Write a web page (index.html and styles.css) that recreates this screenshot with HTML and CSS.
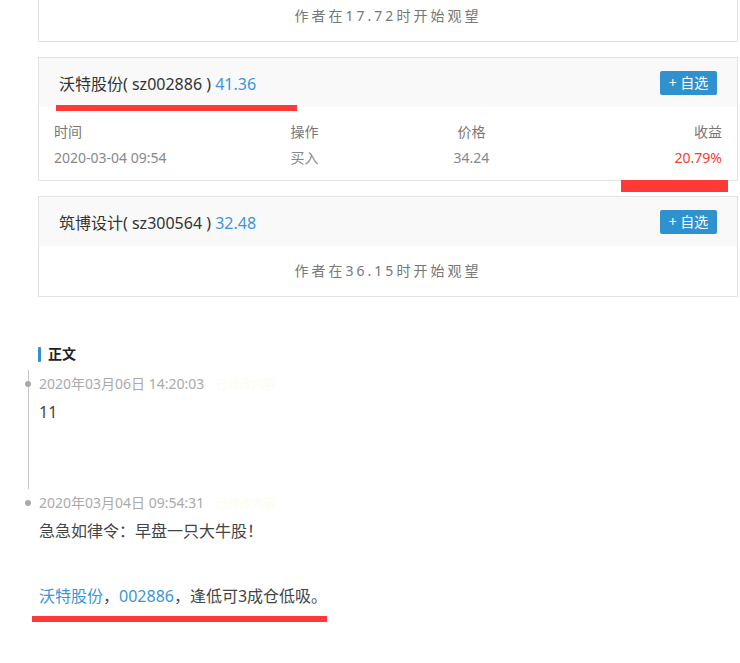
FILE: index.html
```html
<!DOCTYPE html>
<html lang="zh-CN">

<head>
  <meta charset="UTF-8">
  <meta name="viewport" content="width=device-width, initial-scale=1.0">
  <title>正文</title>
  <link rel="stylesheet" href="styles.css">
</head>

<body>
  <div class="wrap">
    <div class="stocks">
      <div class="card card-cut">
        <div class="watch">作者在17.72时开始观望</div>
      </div>

      <div class="card">
        <div class="card-head">
          <div class="title">沃特股份( sz002886 ) <span class="price">41.36</span></div>
          <a class="btn-add">+ 自选</a>
          <i class="mark mark-title"></i>
        </div>
        <div class="trade">
          <div class="trade-row trade-th">
            <span>时间</span><span>操作</span><span>价格</span><span>收益</span>
          </div>
          <div class="trade-row">
            <span>2020-03-04 09:54</span><span>买入</span><span>34.24</span><span class="up">20.79%</span>
          </div>
        </div>
        <i class="mark mark-gain"></i>
      </div>

      <div class="card">
        <div class="card-head">
          <div class="title">筑博设计( sz300564 ) <span class="price">32.48</span></div>
          <a class="btn-add">+ 自选</a>
        </div>
        <div class="watch">作者在36.15时开始观望</div>
      </div>
    </div>

    <h3 class="sec-title">正文</h3>

    <ul class="timeline">
      <li class="tl-item">
        <div class="tl-time">2020年03月06日 14:20:03 <span class="tl-edit">已修改内容</span></div>
        <p class="tl-text">11</p>
      </li>
      <li class="tl-item">
        <div class="tl-time">2020年03月04日 09:54:31 <span class="tl-edit">已修改内容</span></div>
        <p class="tl-text">急急如律令：早盘一只大牛股！</p>
        <p class="tl-text">&nbsp;</p>
        <p class="tl-text"><a class="link">沃特股份</a><span class="cjk">，</span><a class="link">002886</a><span class="cjk">，</span>逢低可3成仓低吸。</p>
        <div class="mark-text"></div>
      </li>
    </ul>
  </div>
</body>

</html>
```

FILE: styles.css
```css
body {
  margin: 0;
  font-family: "Noto Sans", "Noto Sans CJK SC", sans-serif;
  color: #444;
  background: #fff;
}

.wrap {
  padding-left: 38px;
  width: 700px;
}

.card {
  position: relative;
  border: 1px solid #e3e3e3;
  margin-bottom: 15px;
}

.card-cut {
  margin-top: -10px;
}

.card-head {
  position: relative;
  height: 49px;
  padding: 0 20px;
  background: #f9f9f9;
  display: flex;
  align-items: center;
  justify-content: space-between;
}

.title {
  font-size: 16px;
  color: #333;
}

.price {
  color: #3b96d8;
}

.btn-add {
  width: 57px;
  height: 24px;
  line-height: 24px;
  text-align: center;
  background: #2f92cf;
  color: #fff;
  font-size: 14px;
  border-radius: 2px;
}

.watch {
  height: 50px;
  line-height: 50px;
  text-align: center;
  font-size: 14px;
  color: #777;
  letter-spacing: 3px;
}

.trade {
  padding: 12px 15px 9px 15px;
  font-size: 14px;
}

.trade-row {
  display: grid;
  grid-template-columns: repeat(4, 1fr);
  line-height: 26px;
  color: #888;
}

.trade-th {
  color: #777;
}

.trade-row span:nth-child(2),
.trade-row span:nth-child(3) {
  text-align: center;
}

.trade-row span:nth-child(4) {
  text-align: right;
}

.up {
  color: #f0412a;
}

/* 红色标注 */
.mark {
  position: absolute;
  display: block;
  background: #ff3838;
}

.mark-title {
  left: 17px;
  top: 47px;
  width: 241px;
  height: 6px;
}

.mark-gain {
  right: 9px;
  top: 100%;
  width: 107px;
  height: 12px;
}

.mark-text {
  width: 295px;
  height: 6px;
  margin: 4px 0 0 -7px;
  background: #ff3838;
}

.sec-title {
  margin: 47px 0 6px 0;
  height: 20px;
  line-height: 20px;
  font-size: 14px;
  font-weight: bold;
  color: #222;
  display: flex;
  align-items: center;
}

.sec-title::before {
  content: "";
  width: 3px;
  height: 15px;
  margin-right: 7px;
  background: #2f92cf;
  border-radius: 1px;
}

.timeline {
  list-style: none;
  margin: 0 0 0 -10px;
  padding: 0;
}

.tl-item {
  position: relative;
  padding: 4px 0 0 10px;
  border-left: 1px solid #c8c8c8;
}

.tl-item:first-child {
  padding-bottom: 61px;
}

.tl-item:last-child {
  border-left-color: transparent;
}

.tl-item::before {
  content: "";
  position: absolute;
  left: -4px;
  top: 11px;
  width: 6px;
  height: 6px;
  border-radius: 50%;
  background: #aaa;
}

.tl-time {
  line-height: 20px;
  font-size: 14px;
  color: #aaa;
}

.tl-edit {
  margin-left: 8px;
  font-size: 12px;
  color: #fdfcf0;
}

.tl-text {
  margin: 1px 0 0 0;
  line-height: 32px;
  font-size: 16px;
  color: #444;
}

.tl-text + .tl-text {
  margin-top: 0;
}

.cjk {
  font-family: "Noto Sans CJK SC", sans-serif;
}

.link {
  color: #3b96d8;
}
```
